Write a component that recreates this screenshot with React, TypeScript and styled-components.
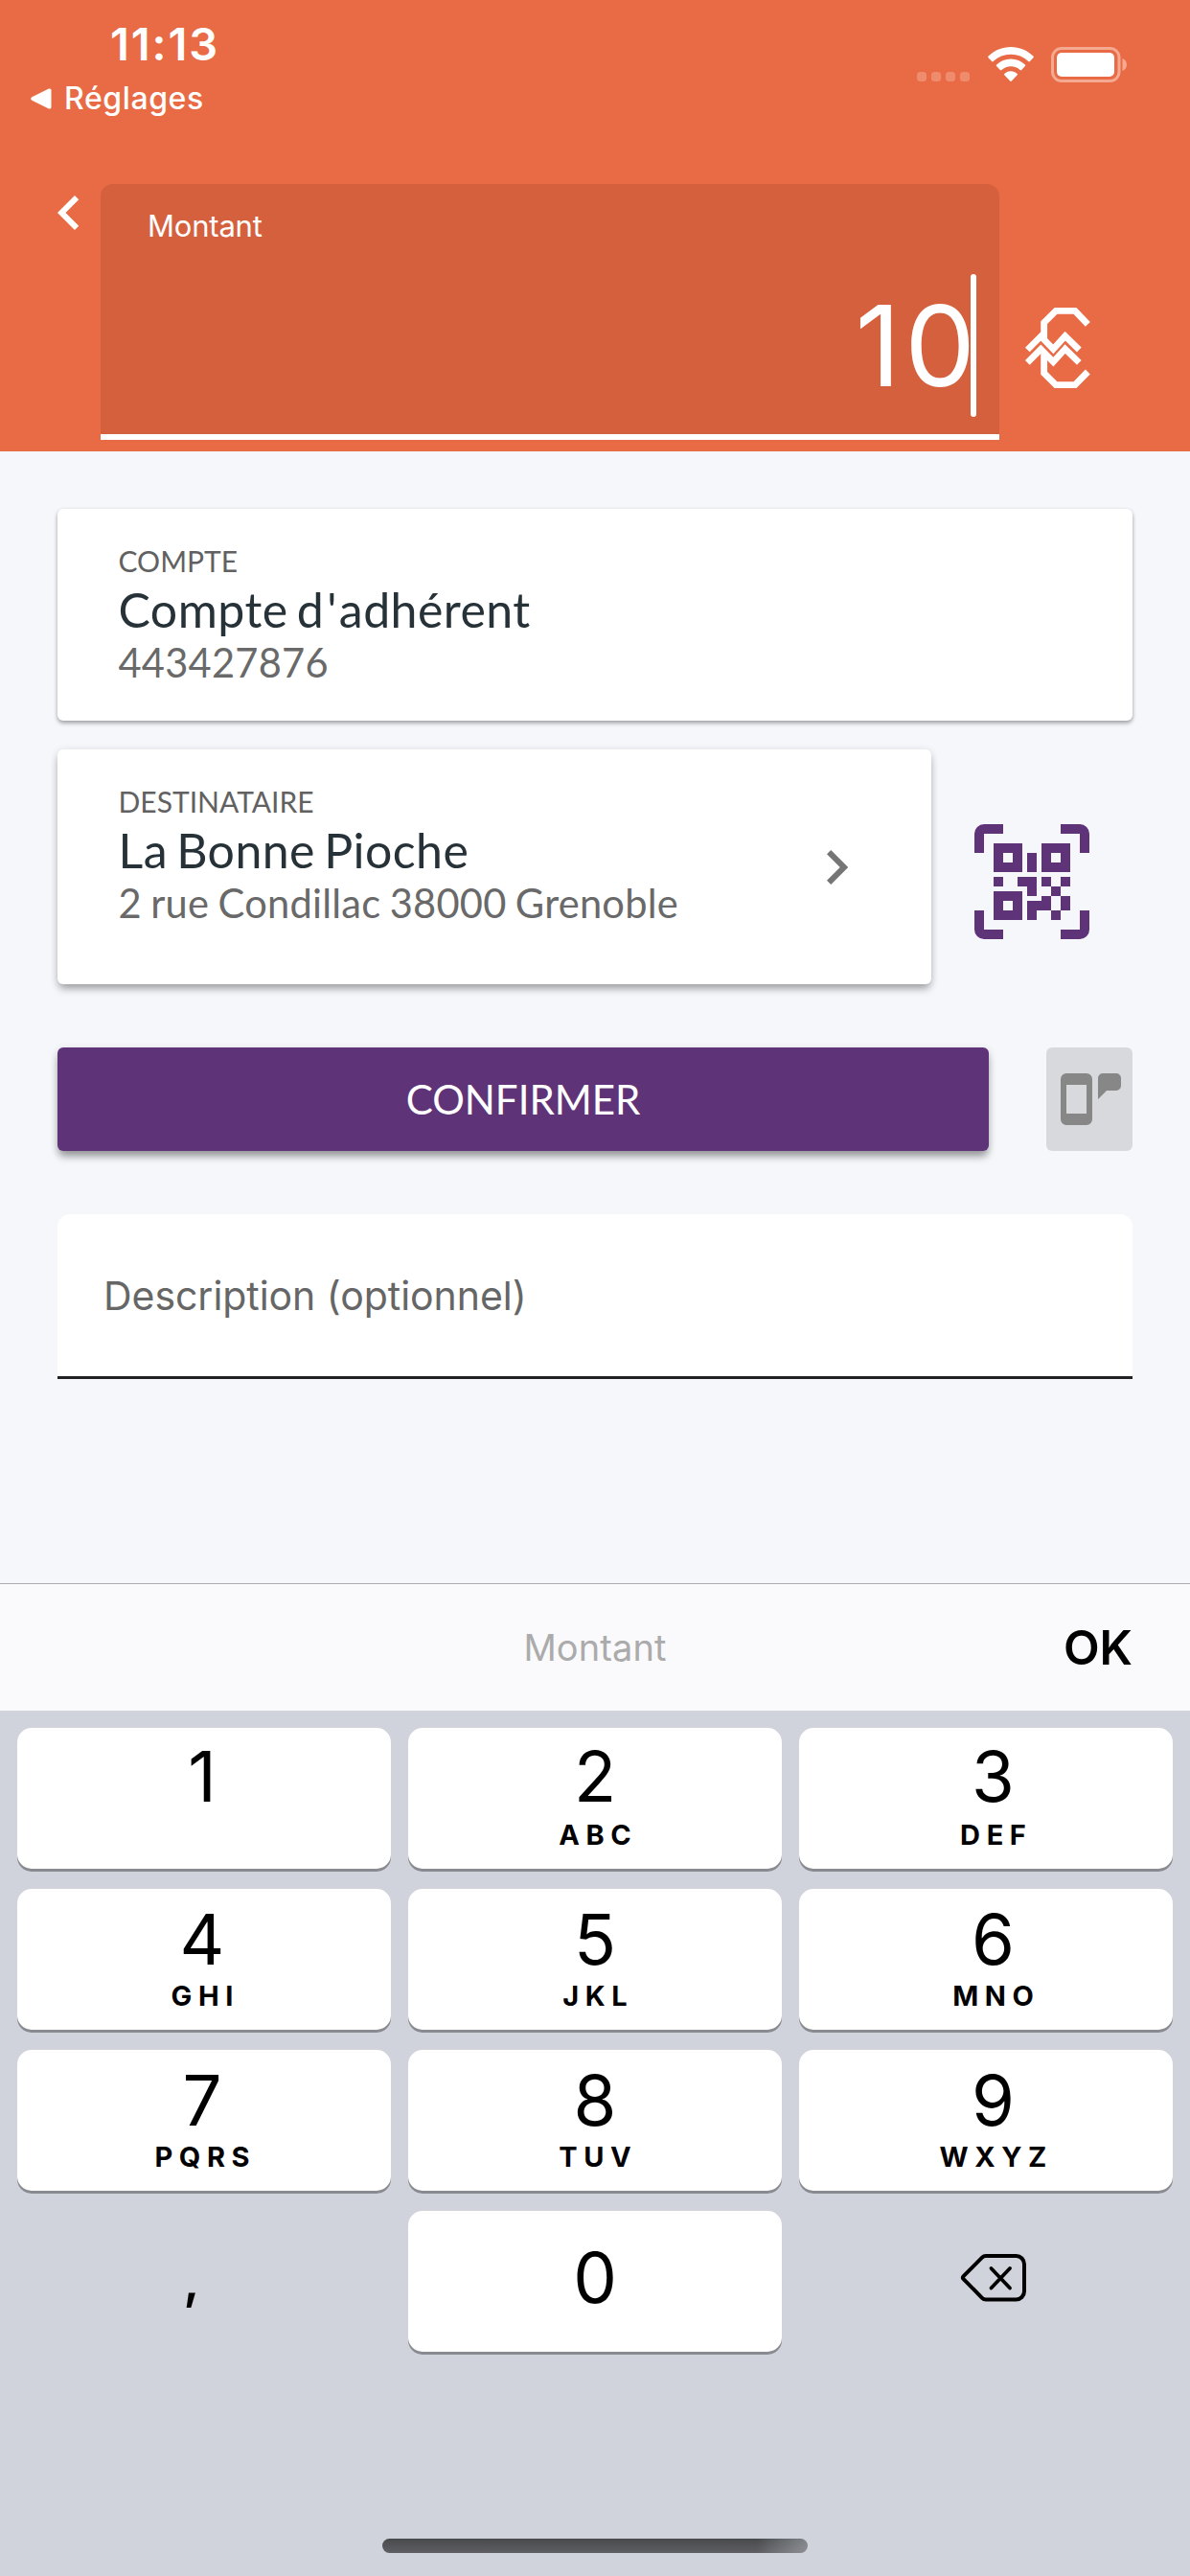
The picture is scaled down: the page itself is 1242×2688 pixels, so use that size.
import React from 'react';
import styled, { createGlobalStyle } from 'styled-components';

const Global = createGlobalStyle`
  * { box-sizing: border-box; }
  body { margin: 0; background: #f5f7fb; }
`;

const ui = '"Inter", "Liberation Sans", sans-serif';
const brand = '"Lato", "Liberation Sans", sans-serif';

const Screen = styled.div`
  width: 1242px;
  height: 2688px;
  display: flex;
  flex-direction: column;
  background: #f5f7fb;
  font-family: ${ui};
  overflow: hidden;
`;

const Header = styled.header`
  height: 471px;
  background: #e86b45;
  color: #fff;
  display: flex;
  flex-direction: column;
`;

const StatusBar = styled.div`
  height: 192px;
  display: flex;
  justify-content: space-between;
  padding: 16px 64px 0 32px;
`;

const StatusLeft = styled.div`
  display: flex;
  flex-direction: column;
  gap: 6px;
`;

const Time = styled.div`
  font-size: 47px;
  font-weight: 600;
  line-height: 60px;
  padding-left: 83px;
  letter-spacing: 1.9px;
`;

const BackLink = styled.div`
  display: flex;
  align-items: center;
  gap: 13px;
  font-size: 32px;
  font-weight: 500;
  line-height: 41px;
  letter-spacing: 0.6px;
`;

const StatusIcons = styled.div`
  height: 37px;
  margin-top: 33px;
  display: flex;
  align-items: flex-start;
`;

const Dots = styled.div`
  display: flex;
  gap: 5px;
  margin: 26px 19px 0 0;
`;

const Dot = styled.span`
  width: 10px;
  height: 10px;
  border-radius: 3.5px;
  background: #ef8c6e;
`;

const AmountRow = styled.div`
  display: flex;
  height: 267px;
`;

const BackButton = styled.div`
  width: 105px;
  padding: 12px 0 0 60px;
`;

const AmountField = styled.div`
  width: 938px;
  height: 267px;
  background: #d5603d;
  border-bottom: 6.5px solid #fff;
  border-radius: 13px 13px 0 0;
  display: flex;
  flex-direction: column;
  justify-content: space-between;
  padding: 23px 24px 18px 49px;
`;

const FieldLabel = styled.div`
  font-size: 31px;
  line-height: 41px;
  letter-spacing: -0.2px;
`;

const AmountValue = styled.div`
  display: flex;
  justify-content: flex-end;
  height: 149px;
  font-size: 117px;
  line-height: 149px;
  letter-spacing: 4px;
`;

const Caret = styled.span`
  width: 6px;
  height: 149px;
  margin-left: -9px;
  border-radius: 3px;
  background: #fff;
`;

const Currency = styled.div`
  padding: 118px 0 0 17px;
`;

const Content = styled.main`
  height: 1181px;
  padding: 60px 60px 0;
`;

const Card = styled.section<{ $w: number; $h: number; $raised?: boolean }>`
  width: ${p => p.$w}px;
  height: ${p => p.$h}px;
  background: #fff;
  border-radius: 6px;
  padding: 39px 0 0 63.5px;
  font-family: ${brand};
  display: flex;
  justify-content: space-between;
  box-shadow: ${p =>
    p.$raised
      ? '0 7px 8px -2px rgba(0,0,0,.26), 0 2px 8px rgba(0,0,0,.16)'
      : '0 3px 4px rgba(0,0,0,.26), 0 1px 4px rgba(0,0,0,.14)'};
`;

const Overline = styled.div`
  font-size: 30px;
  line-height: 30px;
  color: #616161;
`;

const Title = styled.div`
  font-size: 50px;
  line-height: 60px;
  margin-top: 6px;
  letter-spacing: 0.45px;
  word-spacing: -4px;
  color: #263238;
`;

const Apostrophe = styled.span`
  margin: 0 2px 0 3px;
`;

const Detail = styled.div`
  font-size: 41.6px;
  line-height: 50px;
  letter-spacing: 0.25px;
  word-spacing: -1.6px;
  color: #696969;
`;

const RecipientRow = styled.div`
  display: flex;
  margin-top: 30px;
`;

const CardChevron = styled.div`
  padding: 66px 87px 0 0;
`;

const ScanButton = styled.div`
  padding: 78px 0 0 45px;
`;

const ActionRow = styled.div`
  display: flex;
  justify-content: space-between;
  margin-top: 66px;
`;

const ConfirmButton = styled.div`
  width: 972px;
  height: 108px;
  border-radius: 6px;
  background: #5f3378;
  color: #fff;
  font-family: ${brand};
  font-size: 42px;
  line-height: 108px;
  text-align: center;
  box-shadow: 0 8px 9px -2px rgba(0, 0, 0, 0.28), 0 3px 9px rgba(0, 0, 0, 0.2);
`;

const SmsButton = styled.div`
  width: 90px;
  height: 108px;
  border-radius: 6px;
  background: #d8d9dd;
  padding: 27px 0 0 15px;
`;

const DescriptionField = styled.div`
  margin-top: 66px;
  height: 172px;
  background: #fff;
  border-bottom: 3px solid #212124;
  border-radius: 13px 13px 0 0;
  padding: 54px 48px 0;
  font-size: 41px;
  line-height: 62px;
  letter-spacing: -0.05px;
  color: #666;
`;

const AccessoryBar = styled.div`
  height: 133px;
  border-top: 1px solid #aaacb0;
  background: #fafafc;
  display: grid;
  grid-template-columns: 1fr auto 1fr;
  align-items: center;
`;

const AccessoryTitle = styled.div`
  grid-column: 2;
  font-size: 38px;
  line-height: 50px;
  letter-spacing: 0.1px;
  color: #ababab;
`;

const AccessoryDone = styled.div`
  justify-self: end;
  padding: 2px 60px 0 0;
  font-size: 49px;
  font-weight: 600;
  line-height: 60px;
  color: #000;
`;

const Keyboard = styled.div`
  height: 903px;
  background: #d0d3db;
  display: flex;
  flex-direction: column;
  align-items: center;
  justify-content: space-between;
  padding: 18px 18px 24px;
`;

const KeyGrid = styled.div`
  width: 1206px;
  display: grid;
  grid-template-columns: repeat(3, 390px);
  grid-auto-rows: 147px;
  gap: 21px 18px;
`;

const Key = styled.div<{ $plain?: boolean; $left?: number; $right?: number; $top?: number }>`
  border-radius: 15px;
  background: ${p => (p.$plain ? 'transparent' : '#fff')};
  box-shadow: ${p => (p.$plain ? 'none' : '0 3px 0 #888a8f')};
  display: flex;
  flex-direction: column;
  align-items: center;
  padding: ${p => p.$top ?? 0}px ${p => p.$right ?? 0}px 0 ${p => p.$left ?? 0}px;
  color: #000;
`;

const Digit = styled.div`
  font-size: 72.5px;
  line-height: 80px;
`;

const Comma = styled.div`
  font-size: 53px;
  font-weight: 600;
  line-height: 80px;
`;

const Letters = styled.div<{ $gap: number }>`
  margin-top: ${p => p.$gap}px;
  font-size: 29px;
  font-weight: 700;
  line-height: 40px;
  letter-spacing: 6.6px;
  margin-right: -6.6px;
`;

const HomeIndicator = styled.div`
  width: 444px;
  height: 15px;
  border-radius: 8px;
  background: linear-gradient(90deg, transparent 88%, rgba(208, 211, 219, 0.42) 100%),
    linear-gradient(180deg, #474a4b, #5f5f64);
`;

const keys = [
  ['1', ''], ['2', 'ABC'], ['3', 'DEF'],
  ['4', 'GHI'], ['5', 'JKL'], ['6', 'MNO'],
  ['7', 'PQRS'], ['8', 'TUV'], ['9', 'WXYZ'],
];

const columnInset = [
  { $left: 0, $right: 4 },
  { $left: 0, $right: 0 },
  { $left: 15, $right: 0 },
];

const WifiIcon = () => (
  <svg width="48" height="37" viewBox="0 0 48 37" fill="#fff">
    <path d="M24 0C33 0 41 3.4 47.4 9.6a1.2 1.2 0 0 1 0 1.7L43.9 15a1.1 1.1 0 0 1-1.6 0A26.5 26.5 0 0 0 24 7.7 26.5 26.5 0 0 0 5.7 15a1.1 1.1 0 0 1-1.6 0L.6 11.300a1.200 1.200 0 0 1 0-1.700C7 3.400 15 0 24 0z" />
    <path d="M24 12.600c5.700 0 10.900 2.200 14.900 5.800a1.200 1.200 0 0 1 0 1.700l-3.700 3.800a1.200 1.200 0 0 1-1.600 0A14.300 14.300 0 0 0 24 20.200c-3.700 0-7 1.400-9.600 3.700a1.200 1.200 0 0 1-1.600 0l-3.700-3.800a1.200 1.200 0 0 1 0-1.700c4-3.600 9.200-5.800 14.900-5.800z" />
    <path d="M24 25.300c2.500 0 4.700.900 6.500 2.400a1.100 1.100 0 0 1 0 1.700l-5.700 6.100a1.100 1.100 0 0 1-1.600 0l-5.700-6.100a1.100 1.100 0 0 1 0-1.700A10 10 0 0 1 24 25.300z" />
  </svg>
);

const BatteryIcon = () => (
  <svg width="81" height="37" viewBox="0 0 81 37">
    <rect x="1.500" y="1.500" width="69.500" height="34" rx="9.500" fill="none" stroke="#f5a991" strokeWidth="3" />
    <rect x="6" y="6" width="60" height="25" rx="5" fill="#fff" />
    <path d="M74.500 12c2.800 1.200 4.500 3.600 4.500 6.500s-1.700 5.300-4.500 6.500z" fill="#f5a991" />
  </svg>
);

const EuroIcon = () => (
  <svg width="100" height="100" viewBox="0 0 300 300" fill="none" stroke="#fff" strokeWidth="20.500">
    <path d="M226 85L186 43H126L89 80V132" />
    <path d="M89 178V238L126 275H186L226 234" />
    <g strokeWidth="20">
      <path d="M37 165L79 123L118 163L155 122L199 165" />
      <path d="M37 205L79 163L118 203L155 162L199 205" />
    </g>
  </svg>
);

const QrScanIcon = () => (
  <svg width="120" height="120" viewBox="0 0 120 120" fill="#5f3378" shapeRendering="geometricPrecision">
    <path d="M0 30V10A10 10 0 0 1 10 0H30V10H10V30zM90 0H110A10 10 0 0 1 120 10V30H110V10H90zM0 90V110A10 10 0 0 0 10 120H30V110H10V90zM120 90V110A10 10 0 0 1 110 120H90V110H110V90z" />
    <path fillRule="evenodd" d="M20 20H50V50H20zM30 30V40H40V30zM70 20H100V50H70zM80 30V40H90V30zM20 70H50V100H20zM30 80V90H40V80z" />
    <path d="M55 30H65V50H55zM20 55H30V65H20zM45 55H65V75H55V65H45zM70 55H80V65H70zM90 55H100V65H90zM80 65H90V75H80zM70 75H80V90H65V100H55V80H70zM90 75H100V90H90zM80 90H90V100H80z" />
  </svg>
);

const SmsIcon = () => (
  <svg width="63" height="54" viewBox="0 0 63 54" fill="#878787">
    <path fillRule="evenodd" d="M6 0H27a6 6 0 0 1 6 6V48a6 6 0 0 1-6 6H6a6 6 0 0 1-6-6V6A6 6 0 0 1 6 0zM6 12V42H27V12z" />
    <path d="M44 0H58a5 5 0 0 1 5 5V13a5 5 0 0 1-5 5H48L39 27V5A5 5 0 0 1 44 0z" />
  </svg>
);

const DeleteIcon = () => (
  <svg width="70" height="52" viewBox="0 0 70 52" fill="none" stroke="#000" strokeWidth="4" strokeLinecap="round" strokeLinejoin="round">
    <path d="M27 3H58.500a8.500 8.500 0 0 1 8.500 8.500V40a8.500 8.500 0 0 1-8.500 8.500H27a5.500 5.500 0 0 1-4-1.700L3.600 27.200a2.200 2.200 0 0 1 0-3L23 4.700A5.500 5.500 0 0 1 27 3z" />
    <path d="M32.500 16L52 36.500M52 16L32.500 36.500" strokeWidth="3.800" />
  </svg>
);

export default function App() {
  return (
    <Screen>
      <Global />
      <Header>
        <StatusBar>
          <StatusLeft>
            <Time>11:13</Time>
            <BackLink>
              <svg width="22" height="22" viewBox="0 0 22 22" fill="#fff">
                <path d="M1.300 9.300L19 .6a1.700 1.700 0 0 1 2.500 1.500V19.900A1.700 1.700 0 0 1 19 21.400L1.300 12.700a1.900 1.900 0 0 1 0-3.400z" />
              </svg>
              Réglages
            </BackLink>
          </StatusLeft>
          <StatusIcons>
            <Dots>
              <Dot /><Dot /><Dot /><Dot />
            </Dots>
            <WifiIcon />
            <svg width="18" height="1" />
            <BatteryIcon />
          </StatusIcons>
        </StatusBar>
        <AmountRow>
          <BackButton>
            <svg width="22.2" height="36" viewBox="8 6 7.410 12" fill="#fff">
              <path d="M15.410 7.410L14 6l-6 6 6 6 1.410-1.410L10.830 12z" />
            </svg>
          </BackButton>
          <AmountField>
            <FieldLabel>Montant</FieldLabel>
            <AmountValue>10<Caret /></AmountValue>
          </AmountField>
          <Currency><EuroIcon /></Currency>
        </AmountRow>
      </Header>

      <Content>
        <Card $w={1122} $h={221}>
          <div>
            <Overline>COMPTE</Overline>
            <Title>Compte d<Apostrophe>'</Apostrophe>adhérent</Title>
            <Detail>443427876</Detail>
          </div>
        </Card>
        <RecipientRow>
          <Card $w={912} $h={245} $raised>
            <div>
              <Overline>DESTINATAIRE</Overline>
              <Title>La Bonne Pioche</Title>
              <Detail>2 rue Condillac 38000 Grenoble</Detail>
            </div>
            <CardChevron>
              <svg width="22.2" height="36" viewBox="8.590 6 7.410 12" fill="#757575">
                <path d="M10 6L8.590 7.410 13.170 12l-4.580 4.590L10 18l6-6z" />
              </svg>
            </CardChevron>
          </Card>
          <ScanButton><QrScanIcon /></ScanButton>
        </RecipientRow>
        <ActionRow>
          <ConfirmButton>CONFIRMER</ConfirmButton>
          <SmsButton><SmsIcon /></SmsButton>
        </ActionRow>
        <DescriptionField>Description (optionnel)</DescriptionField>
      </Content>

      <AccessoryBar>
        <AccessoryTitle>Montant</AccessoryTitle>
        <AccessoryDone>OK</AccessoryDone>
      </AccessoryBar>

      <Keyboard>
        <KeyGrid>
          {keys.map(([digit, letters], i) => (
            <Key key={digit} $top={i < 3 ? 11 : 13} {...columnInset[i % 3]}>
              <Digit>{digit}</Digit>
              {letters && <Letters $gap={i < 3 ? 0.5 : -0.75}>{letters}</Letters>}
            </Key>
          ))}
          <Key $plain $top={32} $right={26}><Comma>,</Comma></Key>
          <Key $top={30}><Digit>0</Digit></Key>
          <Key $plain $top={44} $left={16}><DeleteIcon /></Key>
        </KeyGrid>
        <HomeIndicator />
      </Keyboard>
    </Screen>
  );
}
